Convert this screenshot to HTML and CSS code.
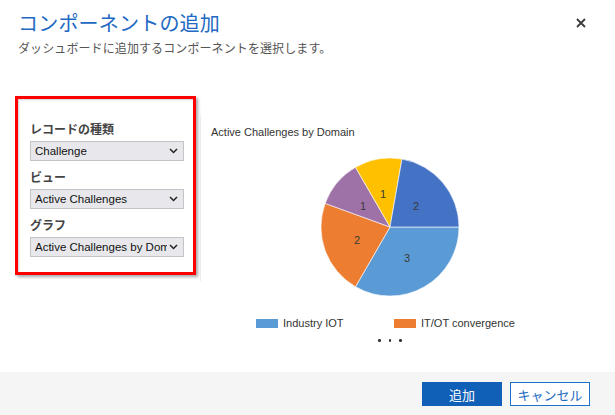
FILE: index.html
```html
<!DOCTYPE html>
<html lang="ja">
<head>
<meta charset="utf-8">
<title>コンポーネントの追加</title>
<link rel="stylesheet" href="styles.css">
</head>
<body>
<div class="dialog">
  <header class="header">
    <div class="heading">
      <h1 class="title">コンポーネントの追加</h1>
      <p class="subtitle">ダッシュボードに追加するコンポーネントを選択します。</p>
    </div>
    <button class="close" aria-label="閉じる">
      <svg width="10" height="10" viewBox="0 0 10 10"><path d="M1 1 L9 9 M9 1 L1 9" stroke="#3b3b3b" stroke-width="1.8" fill="none"/></svg>
    </button>
  </header>

  <main class="body">
    <section class="panel">
      <div class="field">
        <label class="label">レコードの種類</label>
        <div class="select"><span class="select-text">Challenge</span><svg class="chev" width="9" height="6" viewBox="0 0 9 6"><path d="M1 1 L4.5 4.5 L8 1" stroke="#222" stroke-width="1.5" fill="none"/></svg></div>
      </div>
      <div class="field">
        <label class="label">ビュー</label>
        <div class="select"><span class="select-text">Active Challenges</span><svg class="chev" width="9" height="6" viewBox="0 0 9 6"><path d="M1 1 L4.5 4.5 L8 1" stroke="#222" stroke-width="1.5" fill="none"/></svg></div>
      </div>
      <div class="field">
        <label class="label">グラフ</label>
        <div class="select"><span class="select-text">Active Challenges by Domain</span><svg class="chev" width="9" height="6" viewBox="0 0 9 6"><path d="M1 1 L4.5 4.5 L8 1" stroke="#222" stroke-width="1.5" fill="none"/></svg></div>
      </div>
    </section>

    <section class="chart">
      <div class="chart-title">Active Challenges by Domain</div>
      <svg class="pie" width="140" height="140" viewBox="0 0 140 140">
        <g stroke="#ffffff" stroke-width="0.6">
          <path d="M70 70 L139 70 A69 69 0 0 1 35.5 129.76 Z" fill="#5b9bd5"/>
          <path d="M70 70 L35.5 129.76 A69 69 0 0 1 5.16 46.40 Z" fill="#ed7d31"/>
          <path d="M70 70 L5.16 46.40 A69 69 0 0 1 35.5 10.24 Z" fill="#9e72a6"/>
          <path d="M70 70 L35.5 10.24 A69 69 0 0 1 81.98 2.05 Z" fill="#ffc000"/>
          <path d="M70 70 L81.98 2.05 A69 69 0 0 1 139 70 Z" fill="#4472c4"/>
        </g>
        <g class="pie-labels" font-family="Liberation Sans, Arial, sans-serif" font-size="11" fill="#3a3a3a" text-anchor="middle">
          <text x="96" y="53">2</text>
          <text x="63" y="41">1</text>
          <text x="43" y="53">1</text>
          <text x="37" y="87">2</text>
          <text x="87" y="105">3</text>
        </g>
      </svg>
      <div class="legend">
        <div class="legend-item"><span class="swatch swatch-blue"></span>Industry IOT</div>
        <div class="legend-item"><span class="swatch swatch-orange"></span>IT/OT convergence</div>
      </div>
      <div class="more"><span class="dot"></span><span class="dot"></span><span class="dot"></span></div>
    </section>
  </main>

  <footer class="footer">
    <button class="btn btn-primary">追加</button>
    <button class="btn btn-secondary">キャンセル</button>
  </footer>
</div>
</body>
</html>
```

FILE: styles.css
```css
* { box-sizing: border-box; }

html, body {
  margin: 0;
  padding: 0;
  background: #ffffff;
}

body {
  font-family: "Noto Sans CJK JP", "Liberation Sans", sans-serif;
  color: #333;
}

.dialog {
  width: 615px;
  height: 415px;
  display: flex;
  flex-direction: column;
  background: #fff;
}

.header {
  display: flex;
  justify-content: space-between;
  align-items: flex-start;
  padding: 8px 0 0 18px;
  height: 58px;
}

.title {
  margin: 0;
  font-size: 20px;
  line-height: 30px;
  font-weight: 400;
  color: #2169c3;
  letter-spacing: 0.2px;
}

.subtitle {
  margin: 0;
  font-size: 12px;
  line-height: 20px;
  color: #555;
  letter-spacing: 0.1px;
}

.close {
  border: 0;
  background: transparent;
  padding: 0;
  margin: 10px 29px 0 0;
  width: 10px;
  height: 10px;
  display: flex;
}

.body {
  flex: 1;
  display: flex;
  align-items: flex-start;
}

.panel {
  margin: 38px 0 0 15px;
  width: 181px;
  border: 3px solid #ff0000;
  box-shadow: 2px 2px 3px rgba(0, 0, 0, 0.35), inset 1px 1px 2px rgba(0, 0, 0, 0.18);
  padding: 22px 9px 15px 12px;
  display: flex;
  flex-direction: column;
  gap: 8px;
}

.field {
  display: flex;
  flex-direction: column;
  gap: 4px;
}

.label {
  font-size: 12px;
  line-height: 16px;
  font-weight: 700;
  color: #444;
}

.select {
  height: 20px;
  border: 1px solid #c4c4c4;
  background: #e8e8ec;
  display: flex;
  align-items: center;
  padding: 0 4px 0 4px;
  gap: 2px;
}

.select-text {
  flex: 1;
  overflow: hidden;
  white-space: nowrap;
  font-family: "Liberation Sans", Arial, sans-serif;
  font-size: 11.5px;
  color: #111;
}

.chev { flex: none; margin-right: 1px; }

.chart {
  position: relative;
  margin: 57px 0 0 4px;
  width: 380px;
  display: flex;
  flex-direction: column;
  align-items: center;
  padding-top: 9px;
}

.chart::before {
  content: "";
  position: absolute;
  left: 0;
  top: 0;
  width: 1px;
  height: 166px;
  background: #ececec;
}

.chart-title {
  align-self: flex-start;
  padding-left: 11px;
  font-family: "Liberation Sans", Arial, sans-serif;
  font-size: 11px;
  line-height: 16px;
  color: #333;
}

.pie {
  margin-top: 17px;
  display: block;
}

.legend {
  align-self: flex-start;
  margin: 18px 0 0 56px;
  display: flex;
}

.legend-item {
  width: 138px;
  display: flex;
  align-items: center;
  gap: 5px;
  font-family: "Liberation Sans", Arial, sans-serif;
  font-size: 11px;
  line-height: 16px;
  color: #333;
}

.swatch {
  width: 22px;
  height: 9px;
  display: inline-block;
}
.swatch-blue { background: #5b9bd5; }
.swatch-orange { background: #ed7d31; }

.more {
  margin-top: 8px;
  display: flex;
  gap: 8px;
}

.dot {
  width: 2.5px;
  height: 2.5px;
  border-radius: 50%;
  background: #333;
}

.footer {
  height: 43px;
  background: #f5f5f5;
  display: flex;
  justify-content: flex-end;
  align-items: flex-start;
  gap: 8px;
  padding: 10px 25px 0 0;
}

.btn {
  width: 80px;
  height: 24px;
  font-family: "Noto Sans CJK JP", sans-serif;
  font-size: 13px;
  line-height: 1;
  padding: 0;
  cursor: pointer;
}

.btn-primary {
  background: #1160b7;
  color: #fff;
  border: 1px solid #1160b7;
}

.btn-secondary {
  background: #fff;
  color: #1a6cc4;
  border: 1px solid #1a73c9;
}
```
